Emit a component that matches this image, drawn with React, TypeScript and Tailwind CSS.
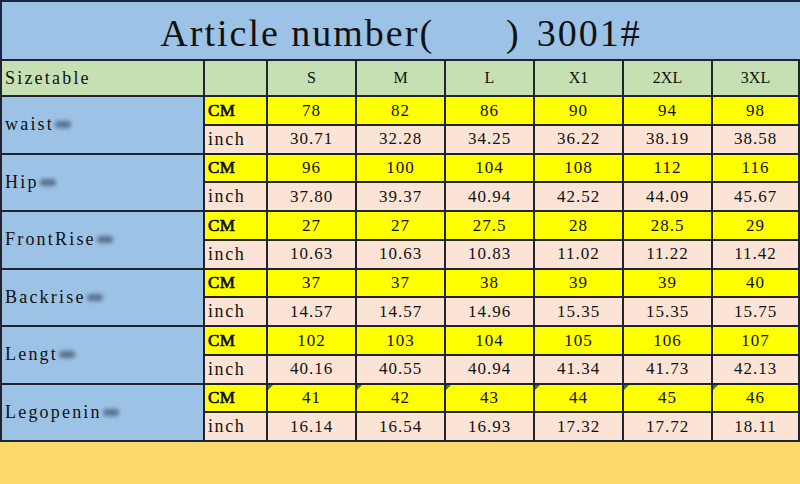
const sizes = ['S', 'M', 'L', 'X1', '2XL', '3XL'];

const rows = [
  { label: 'waist', cm: ['78', '82', '86', '90', '94', '98'], inch: ['30.71', '32.28', '34.25', '36.22', '38.19', '38.58'] },
  { label: 'Hip', cm: ['96', '100', '104', '108', '112', '116'], inch: ['37.80', '39.37', '40.94', '42.52', '44.09', '45.67'] },
  { label: 'FrontRise', cm: ['27', '27', '27.5', '28', '28.5', '29'], inch: ['10.63', '10.63', '10.83', '11.02', '11.22', '11.42'] },
  { label: 'Backrise', cm: ['37', '37', '38', '39', '39', '40'], inch: ['14.57', '14.57', '14.96', '15.35', '15.35', '15.75'] },
  { label: 'Lengt', cm: ['102', '103', '104', '105', '106', '107'], inch: ['40.16', '40.55', '40.94', '41.34', '41.73', '42.13'] },
  { label: 'Legopenin', cm: ['41', '42', '43', '44', '45', '46'], inch: ['16.14', '16.54', '16.93', '17.32', '17.72', '18.11'] },
];

function Smudge() {
  // blurred watermark remnant after each row label
  return <span className="inline-block w-4 h-[7px] ml-[1px] rounded-full bg-[#3b4b66]/70 blur-[2px] align-middle" />;
}

export default function App() {
  return (
    <div className="w-[800px] h-[484px] flex flex-col bg-[#fdd86c] font-['Liberation_Serif',serif] text-[#111]">
      {/* title band */}
      <div className="h-[59px] flex items-center justify-center bg-[#9cc3e6] border-t-2 border-l-2 border-[#1d2340]">
        <h1 className="flex items-baseline text-[38px] tracking-[2px] whitespace-pre leading-none pt-[4px]">
          <span>Article number(</span>
          <span className="w-[72px]" />
          <span>)</span>
          <span className="ml-[16px]">3001#</span>
        </h1>
      </div>

      {/* size table */}
      <div className="grid grid-cols-[201px_61px_87px_87px_87px_87px_87px_85px] grid-rows-[34px_repeat(12,26.75px)] gap-[2px] p-[2px] bg-[#22232e] text-[17px] tracking-[1px]">
        <div className="bg-[#c6e0b4] flex items-center pl-[3px] text-[18px] tracking-[2.2px]">Sizetable</div>
        <div className="bg-[#c6e0b4]" />
        {sizes.map((s) => (
          <div key={s} className="bg-[#c6e0b4] flex items-center justify-center text-[16px] tracking-[0px]">
            {s}
          </div>
        ))}

        {rows.map((r, i) => (
          <div key={r.label} className="contents">
            <div className="row-span-2 bg-[#9cc3e6] flex items-center pl-[3px] text-[18px] tracking-[2.2px]">
              {r.label}
              <Smudge />
            </div>
            <div className="bg-[#ffff00] flex items-center pl-[3px] text-[17px] tracking-[0.5px] [-webkit-text-stroke:0.7px_#111]">CM</div>
            {r.cm.map((v, j) => (
              <div key={j} className="relative bg-[#ffff00] flex items-center justify-center">
                {i === rows.length - 1 && (
                  <span className="absolute left-0 top-0 w-0 h-0 border-t-[5px] border-r-[5px] border-t-[#2e7d32] border-r-transparent" />
                )}
                {v}
              </div>
            ))}
            <div className="bg-[#fbe4d5] flex items-center pl-[3px] text-[18px] tracking-[1.6px]">inch</div>
            {r.inch.map((v, j) => (
              <div key={j} className="bg-[#fbe4d5] flex items-center justify-center">
                {v}
              </div>
            ))}
          </div>
        ))}
      </div>

      <div className="flex-1 bg-[#fdd86c]" />
    </div>
  );
}
